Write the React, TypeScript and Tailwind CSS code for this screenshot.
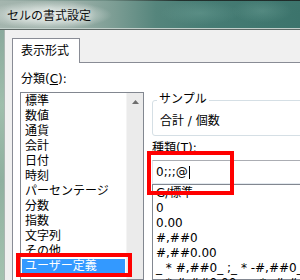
import React from "react";

const cats = [
  "標準",
  "数値",
  "通貨",
  "会計",
  "日付",
  "時刻",
  "パーセンテージ",
  "分数",
  "指数",
  "文字列",
  "その他",
  "ユーザー定義",
];

const fmts = [
  "G/標準",
  "0",
  "0.00",
  "#,##0",
  "#,##0.00",
  '_ * #,##0_ ;_ * -#,##0_ ;_ * "-"_ ;_ @_ ',
  '_ * #,##0.00_ ;_ * -#,##0.00_ ;_ * "-"??_ ;_ @_ ',
];

export default function App() {
  return (
    <div className="relative w-[300px] h-[280px] overflow-hidden text-[12px] text-black font-['DejaVu_Sans','Noto_Sans_CJK_JP',sans-serif]">
      {/* title bar */}
      <div className="h-[1px] bg-[linear-gradient(90deg,#9fb1aa_0%,#6f8f86_35%,#22302d_60%,#1f2b29_100%)]" />
      <div className="h-[27px] flex items-center pl-[7px] bg-[radial-gradient(ellipse_64px_14px_at_48px_14px,rgba(236,240,238,0.95)_0%,rgba(214,223,219,0.7)_55%,rgba(200,212,207,0)_100%),radial-gradient(ellipse_40px_12px_at_200px_12px,rgba(120,170,160,0.35),rgba(120,170,160,0)),radial-gradient(ellipse_30px_12px_at_262px_10px,rgba(120,170,160,0.35),rgba(120,170,160,0)),linear-gradient(90deg,#a4b5ae_0%,#9cb0a9_24%,#7c9d94_38%,#55857c_52%,#467c74_70%,#3c746c_100%)]">
        <span className="font-['Noto_Sans_CJK_JP',sans-serif] leading-[15px] text-[#101010] [text-shadow:0_0_6px_rgba(255,255,255,0.9)]">
          セルの書式設定
        </span>
      </div>
      <div className="h-[1px] bg-[#c2cfca]" />
      <div className="h-[1px] bg-[#5e6a67]" />
      <div className="flex h-[250px]">
        <div className="w-[4px] bg-[linear-gradient(180deg,#8aa99c_0%,#9fbeac_30%,#8fb09f_60%,#a3c2af_100%)]" />
        <div className="w-[1px] bg-[#a9b5b0]" />
        <div className="flex-1 min-w-0 bg-[#f0f0f0] pl-[7px] pt-[8px] flex flex-col">
          <div className="flex">
            <div className="relative z-10 -mb-[1px] h-[25px] w-[68px] bg-white border border-b-0 border-[#898c95] pl-[8px] flex items-center leading-[15px]">
              表示形式
            </div>
          </div>
          <div className="flex-1 min-h-0 bg-white border-t border-l border-[#898c95] flex pl-[7px]">
            {/* left column */}
            <div className="w-[124px] shrink-0 flex flex-col pt-[9px]">
              <div className="ml-[1px] leading-[15px]">
                分類(<span className="underline">C</span>):
              </div>
              <div className="mt-[5px] flex-1 border border-[#828790] flex min-h-0">
                <div className="flex-1 pt-[1px] flex flex-col">
                  {cats.map((c, i) => (
                    <div
                      key={c}
                      className={
                        i === cats.length - 1
                          ? "mx-[1px] h-[15px] leading-[15px] pl-[3px] whitespace-nowrap bg-[#3399ff] text-white"
                          : "mx-[1px] h-[15px] leading-[15px] pl-[3px] whitespace-nowrap"
                      }
                    >
                      {c}
                    </div>
                  ))}
                </div>
                <div className="w-[17px] shrink-0 bg-[#ebebeb] border-l border-[#f4f4f4] flex flex-col">
                  <div className="h-[17px] flex items-center justify-center">
                    <svg width="7" height="4" viewBox="0 0 7 4">
                      <path d="M3.5 0 L7 4 L0 4 Z" fill="#6e6e6e" />
                    </svg>
                  </div>
                </div>
              </div>
            </div>
            {/* right column */}
            <div className="w-[200px] shrink-0 ml-[8px] flex flex-col pt-[37px]">
              <div className="h-[36px] border border-[#d5dfe5] rounded-[3px] flex flex-col">
                <div className="-mt-[9px] ml-[4px] px-[2px] bg-white w-fit leading-[15px]">サンプル</div>
                <div className="mt-[7px] ml-[7px] leading-[15px] whitespace-pre">合計 / 個数</div>
              </div>
              <div className="mt-[5px] leading-[15px]">
                種類(<span className="underline">T</span>):
              </div>
              <div className="mt-[4px] h-[24px] border border-[#e2e3ea] border-t-[#abadb3] border-b-[#e3e9ef] pl-[3px] flex items-center leading-[15px]">
                <span>0;;;@</span>
                <span className="inline-block w-[1px] h-[13px] bg-black ml-[1px]" />
              </div>
              <div className="flex-1 min-h-0 border border-[#828790] pt-[1px] pl-[3px] flex flex-col">
                {fmts.map((f) => (
                  <div key={f} className="h-[15px] leading-[15px] whitespace-pre">
                    {f}
                  </div>
                ))}
              </div>
            </div>
          </div>
        </div>
      </div>
      {/* red annotation boxes */}
      <div className="absolute left-[147px] top-[151px] w-[87px] h-[44px] border-4 border-[#ff0000]" />
      <div className="absolute left-[16px] top-[253px] w-[116px] h-[24px] border-4 border-[#ff0000]" />
    </div>
  );
}
